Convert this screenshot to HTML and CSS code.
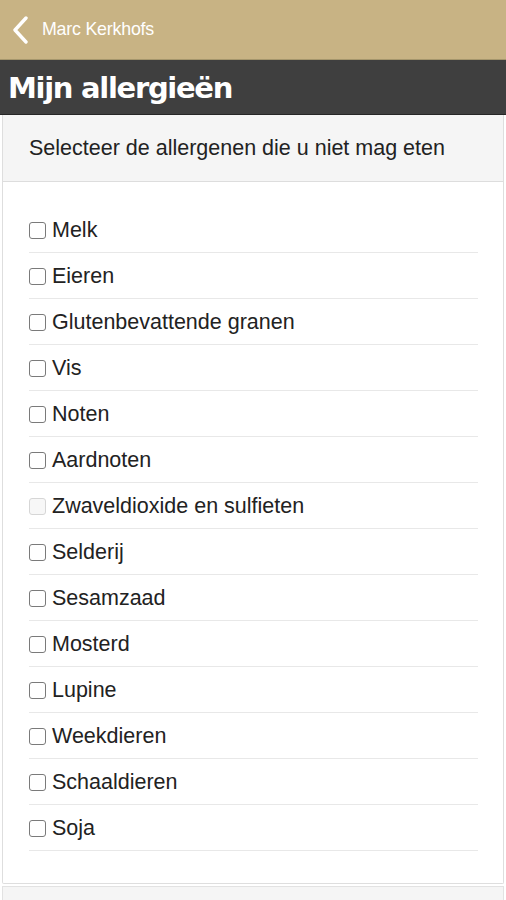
FILE: index.html
```html
<!DOCTYPE html>
<html lang="nl">
<head>
<meta charset="utf-8">
<title>Mijn allergieën</title>
<link rel="stylesheet" href="styles.css">
</head>
<body>
<header class="topbar">
  <svg class="back" width="18" height="28" viewBox="0 0 18 28"><path d="M15 2 L4 14 L15 26" fill="none" stroke="#fff" stroke-width="3.4" stroke-linecap="round" stroke-linejoin="round"/></svg>
  <span class="back-label">Marc Kerkhofs</span>
</header>
<div class="titlebar"><h1>Mijn allergieën</h1></div>
<section class="panel">
  <div class="panel-head">Selecteer de allergenen die u niet mag eten</div>
  <ul class="list">
    <li><span class="cb"></span>Melk</li>
    <li><span class="cb"></span>Eieren</li>
    <li><span class="cb"></span>Glutenbevattende granen</li>
    <li><span class="cb"></span>Vis</li>
    <li><span class="cb"></span>Noten</li>
    <li><span class="cb"></span>Aardnoten</li>
    <li><span class="cb cb-dim"></span>Zwaveldioxide en sulfieten</li>
    <li><span class="cb"></span>Selderij</li>
    <li><span class="cb"></span>Sesamzaad</li>
    <li><span class="cb"></span>Mosterd</li>
    <li><span class="cb"></span>Lupine</li>
    <li><span class="cb"></span>Weekdieren</li>
    <li><span class="cb"></span>Schaaldieren</li>
    <li><span class="cb"></span>Soja</li>
  </ul>
</section>
<div class="footer-panel"></div>
</body>
</html>
```

FILE: styles.css
```css
html, body {
  margin: 0;
  padding: 0;
  background: #fff;
  font-family: "Liberation Sans", Arial, sans-serif;
  overflow: hidden;
}
.topbar {
  height: 59px;
  background: #c8b384;
  border-bottom: 1px solid #a5966c;
  display: flex;
  align-items: center;
  padding-left: 11px;
}
.back {
  display: block;
  margin-right: 13px;
}
.back-label {
  color: #fff;
  font-size: 17.8px;
  font-family: "Liberation Sans", Arial, sans-serif;
  letter-spacing: -0.2px;
}
.titlebar {
  height: 54px;
  background: #3f3f3f;
  border-bottom: 1px solid #262626;
  display: flex;
  align-items: center;
  padding-left: 8px;
}
.titlebar h1 {
  margin: 0;
  padding-top: 2px;
  color: #fff;
  font-family: "DejaVu Sans", sans-serif;
  font-weight: bold;
  font-size: 29px;
  letter-spacing: -1.3px;
}
.panel {
  margin: 0 2px;
  border: 1px solid #dedede;
  border-top: none;
  border-radius: 0 0 2px 2px;
}
.panel-head {
  height: 66px;
  background: #f5f5f5;
  border-bottom: 1px solid #dddddd;
  display: flex;
  align-items: center;
  padding-left: 26px;
  font-size: 21.5px;
  color: #222;
}
.list {
  list-style: none;
  margin: 0;
  padding: 25px 25px 32px 26px;
}
.list li {
  height: 45px;
  box-sizing: border-box;
  height: 46px;
  padding-top: 2px;
  border-bottom: 1px solid #e8e8e8;
  display: flex;
  align-items: center;
  font-size: 21.5px;
  color: #222;
}
.cb {
  width: 15px;
  height: 15px;
  border: 1.5px solid #7a7a7a;
  border-radius: 3px;
  margin-right: 6px;
  background: #fff;
}
.cb-dim {
  border-color: #d6d6d6;
  background: #f7f7f7;
}
.footer-panel {
  margin: 2px 2px 0;
  height: 40px;
  background: #f5f5f5;
  border: 1px solid #e2e2e2;
}
```
